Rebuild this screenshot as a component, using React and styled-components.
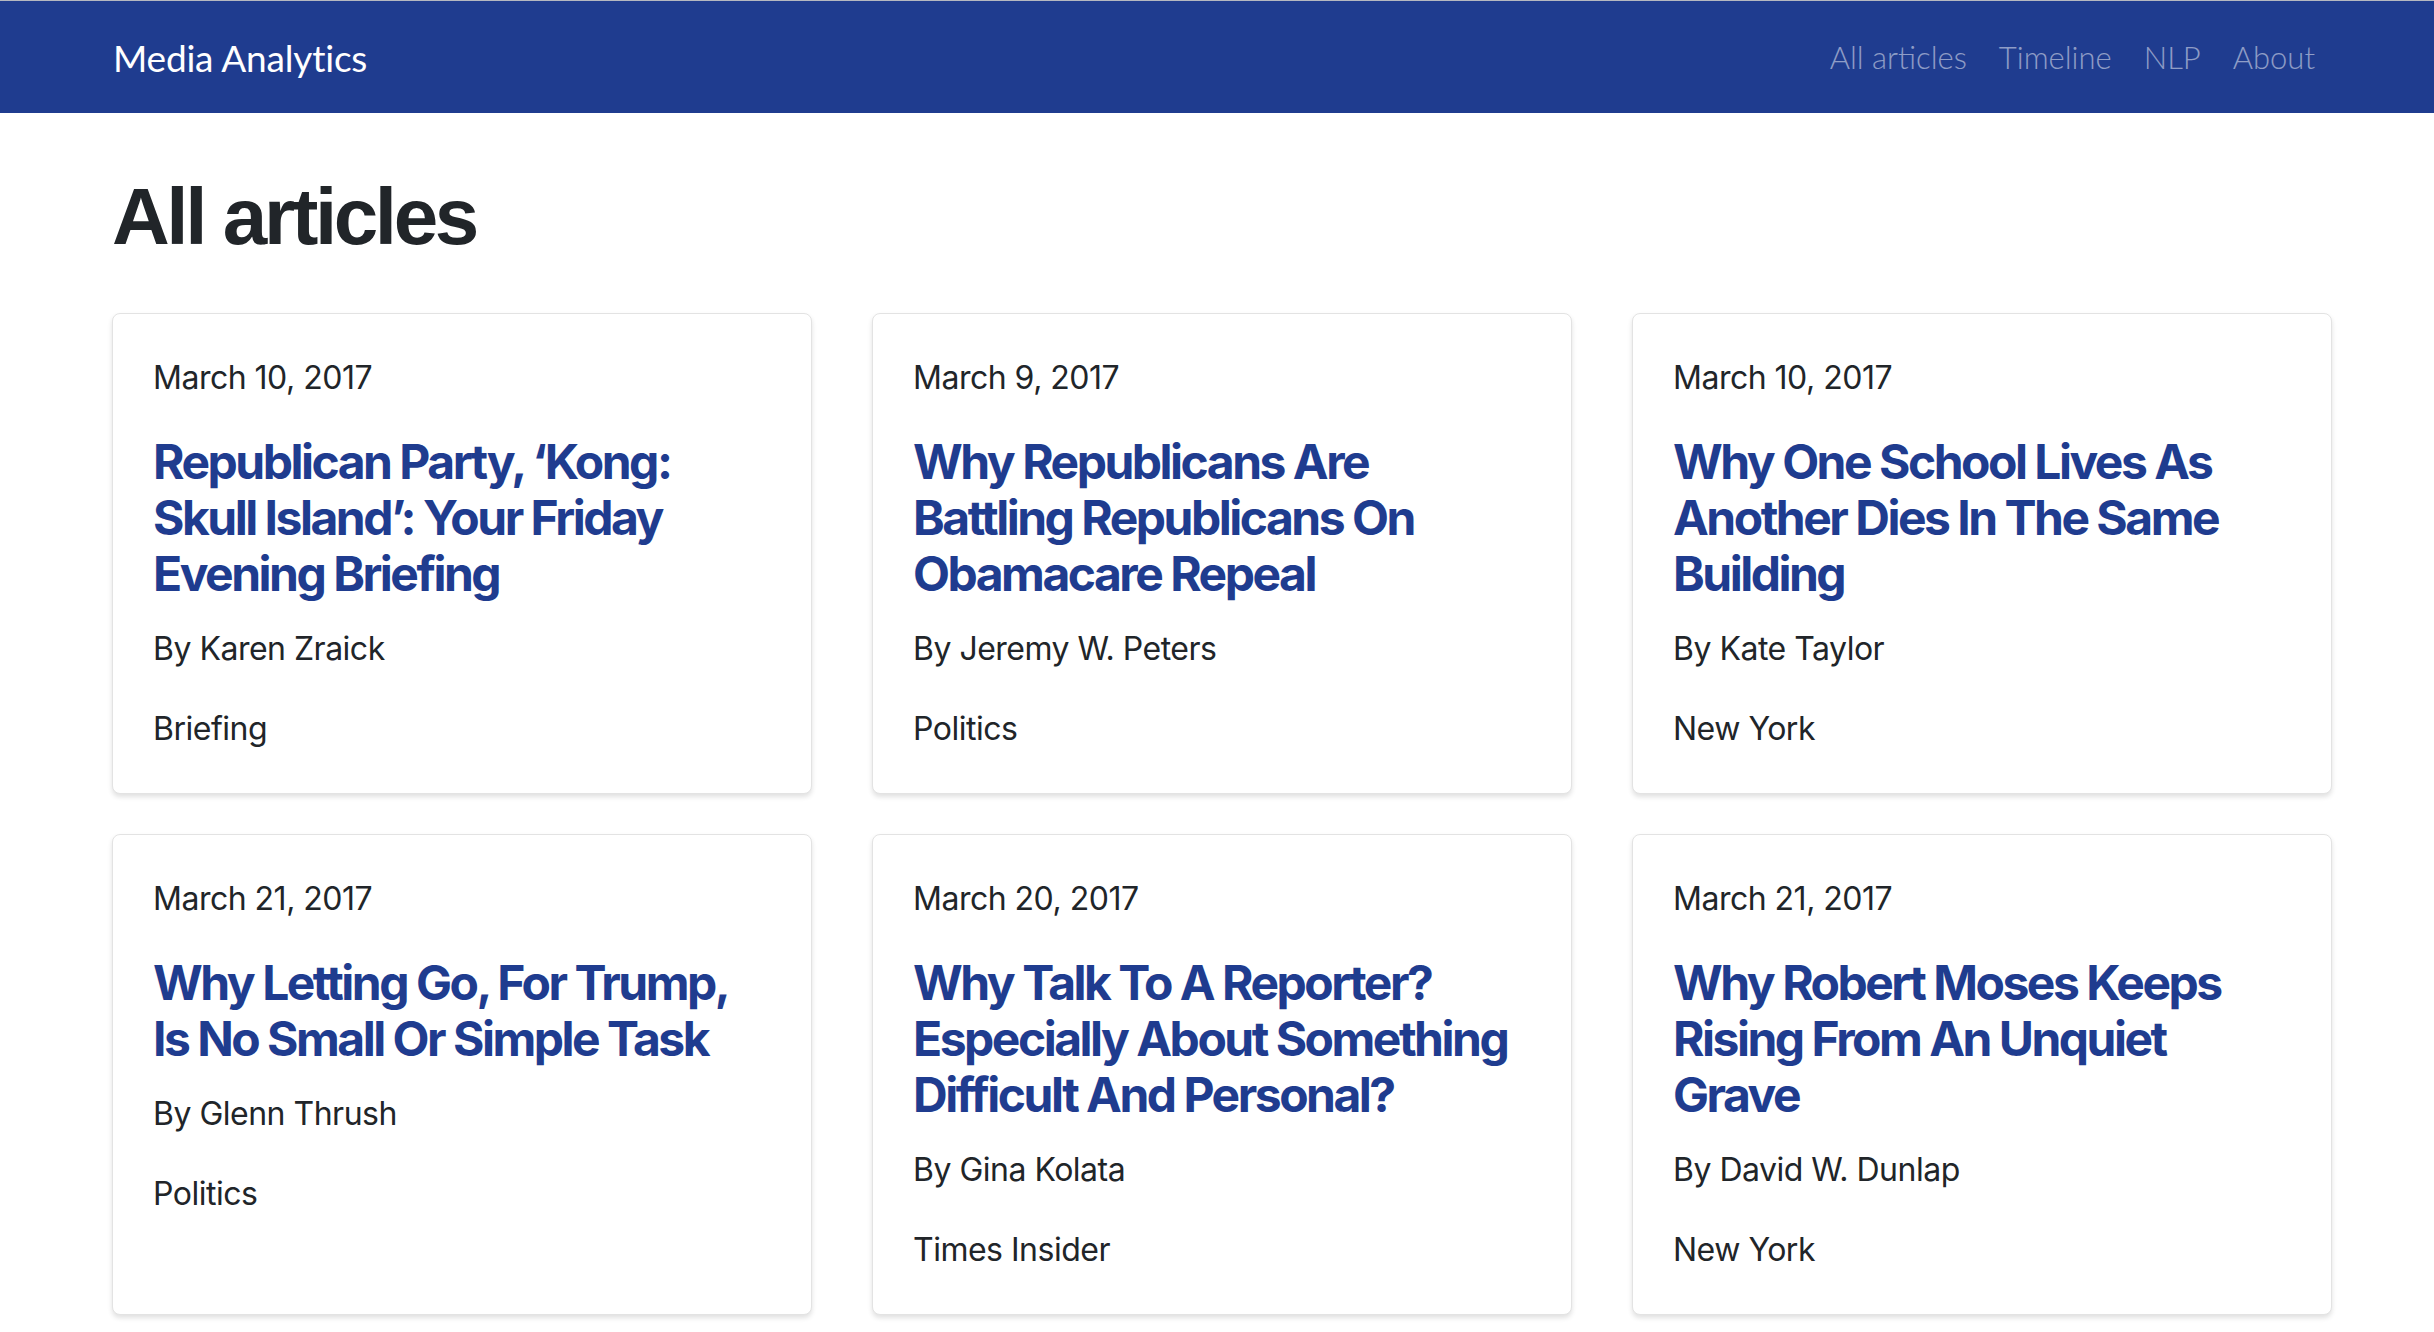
import React from 'react'
import styled, { createGlobalStyle } from 'styled-components'

const GlobalStyle = createGlobalStyle`
  html, body {
    margin: 0;
    padding: 0;
    background: #ffffff;
  }
  body {
    font-family: Inter, 'Noto Sans', sans-serif;
    color: #212529;
  }
`

const Navbar = styled.nav`
  height: 112px;
  border-top: 1px solid #b5b8c0;
  background: #1f3c8f;
  display: flex;
  align-items: center;
  justify-content: space-between;
  padding: 0 103px 0 113px;
`
const Brand = styled.a`
  font-family: Lato, 'Open Sans', sans-serif;
  font-weight: 400;
  font-size: 37px;
  letter-spacing: -0.2px;
  color: #ffffff;
  text-decoration: none;
`
const NavLinks = styled.div`
  display: flex;
  align-items: center;
`
const NavLink = styled.a`
  font-family: Lato, 'Open Sans', sans-serif;
  font-weight: 300;
  font-size: 31px;
  padding: 0 16px;
  color: rgba(255, 255, 255, 0.5);
  text-decoration: none;
`

const Main = styled.main`
  padding: 56px 101px 40px 112px;
`
const Title = styled.h1`
  margin: 0 0 48px;
  font-family: 'Liberation Sans', Arial, sans-serif;
  font-weight: 700;
  font-size: 80px;
  line-height: 96px;
  letter-spacing: -3.4px;
  color: #212529;
`
const Grid = styled.div`
  display: grid;
  grid-template-columns: repeat(3, 700px);
  column-gap: 60px;
  row-gap: 40px;
`
const Card = styled.div`
  border: 1px solid #e3e3e3;
  border-radius: 8px;
  box-shadow: 0 3px 5px rgba(0, 0, 0, 0.12);
  padding: 40px;
  display: flex;
  flex-direction: column;
  background: #fff;
`
const Meta = styled.p`
  margin: 0 0 ${p => p.$gap || 0}px;
  font-size: 32px;
  line-height: 48px;
  letter-spacing: -0.5px;
  color: #212529;
`
const Headline = styled.a`
  display: block;
  margin: 0 0 23px;
  font-weight: 700;
  font-size: 48px;
  line-height: 56px;
  letter-spacing: -2.5px;
  color: #1f3c8f;
  text-decoration: none;
`

const articles = [
  { date: 'March 10, 2017', title: 'Republican Party, \u2018Kong: Skull Island\u2019: Your Friday Evening Briefing', author: 'By Karen Zraick', section: 'Briefing' },
  { date: 'March 9, 2017', title: 'Why Republicans Are Battling Republicans On Obamacare Repeal', author: 'By Jeremy W. Peters', section: 'Politics' },
  { date: 'March 10, 2017', title: 'Why One School Lives As Another Dies In The Same Building', author: 'By Kate Taylor', section: 'New York' },
  { date: 'March 21, 2017', title: 'Why Letting Go, For Trump, Is No Small Or Simple Task', author: 'By Glenn Thrush', section: 'Politics' },
  { date: 'March 20, 2017', title: 'Why Talk To A Reporter? Especially About Something Difficult And Personal?', author: 'By Gina Kolata', section: 'Times Insider' },
  { date: 'March 21, 2017', title: 'Why Robert Moses Keeps Rising From An Unquiet Grave', author: 'By David W. Dunlap', section: 'New York' },
]

const App = () => {
  return (
    <>
      <GlobalStyle />
      <Navbar>
        <Brand href='#'>Media Analytics</Brand>
        <NavLinks>
          <NavLink href='#'>All articles</NavLink>
          <NavLink href='#'>Timeline</NavLink>
          <NavLink href='#'>NLP</NavLink>
          <NavLink href='#'>About</NavLink>
        </NavLinks>
      </Navbar>
      <Main>
        <Title>All articles</Title>
        <Grid>
          {articles.map((a, i) => (
            <Card key={i}>
              <Meta $gap={32}>{a.date}</Meta>
              <Headline href='#'>{a.title}</Headline>
              <Meta $gap={32}>{a.author}</Meta>
              <Meta>{a.section}</Meta>
            </Card>
          ))}
        </Grid>
      </Main>
    </>
  )
}

export default App
